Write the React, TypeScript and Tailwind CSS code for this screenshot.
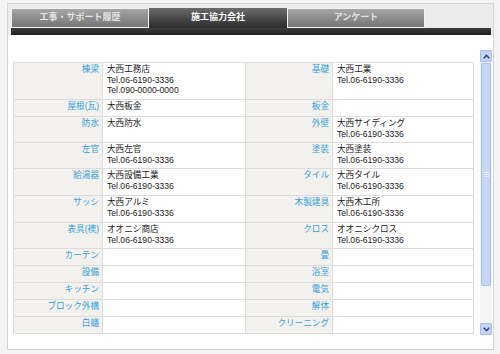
import React from 'react';

type Row = {
  l1: string;
  v1: string[];
  l2: string;
  v2: string[];
};

const TEL = 'Tel.06-6190-3336';

const rows: Row[] = [
  { l1: '棟梁', v1: ['大西工務店', TEL, 'Tel.090-0000-0000'], l2: '基礎', v2: ['大西工業', TEL] },
  { l1: '屋根(瓦)', v1: ['大西板金'], l2: '板金', v2: [] },
  { l1: '防水', v1: ['大西防水'], l2: '外壁', v2: ['大西サイディング', TEL] },
  { l1: '左官', v1: ['大西左官', TEL], l2: '塗装', v2: ['大西塗装', TEL] },
  { l1: '給湯器', v1: ['大西設備工業', TEL], l2: 'タイル', v2: ['大西タイル', TEL] },
  { l1: 'サッシ', v1: ['大西アルミ', TEL], l2: '木製建具', v2: ['大西木工所', TEL] },
  { l1: '表具(襖)', v1: ['オオニシ商店', TEL], l2: 'クロス', v2: ['オオニシクロス', TEL] },
  { l1: 'カーテン', v1: [], l2: '畳', v2: [] },
  { l1: '設備', v1: [], l2: '浴室', v2: [] },
  { l1: 'キッチン', v1: [], l2: '電気', v2: [] },
  { l1: 'ブロック外構', v1: [], l2: '解体', v2: [] },
  { l1: '白蟻', v1: [], l2: 'クリーニング', v2: [] },
];

const font = { fontFamily: '"Liberation Sans", "Noto Sans CJK JP", sans-serif' };

const Label: React.FC<{ text: string }> = ({ text }) => (
  <div className="bg-[#f2f1ee] border-r border-b border-[#dcdcdc] text-right pr-[3px] pt-[1px] text-[#36a0da] leading-[10.5px] whitespace-nowrap">
    {text}
  </div>
);

const Value: React.FC<{ lines: string[] }> = ({ lines }) => (
  <div className="bg-white border-r border-b border-[#dcdcdc] pl-[4px] pt-[1px] text-[#1c1c1c] leading-[10.5px] whitespace-nowrap">
    {lines.map((l, i) => (
      <div key={i}>{l}</div>
    ))}
  </div>
);

const Tab: React.FC<{ label: string; active?: boolean }> = ({ label, active }) =>
  active ? (
    <div className="w-[138px] h-[20px] flex items-center justify-center bg-gradient-to-b from-[#6c6c6c] to-[#2c2c2c] text-white font-bold text-[9px]">
      {label}
    </div>
  ) : (
    <div className="w-[138px] h-[20px] flex items-center justify-center border border-[#f2f2f2] bg-gradient-to-b from-[#a6a6a6] to-[#767676] text-[#e4e4e4] font-bold text-[9px]">
      {label}
    </div>
  );

const Chevron: React.FC<{ up?: boolean }> = ({ up }) => (
  <svg width="7" height="5" viewBox="0 0 7 5">
    <path
      d={up ? 'M0.8 4.2 L3.5 1.3 L6.2 4.2' : 'M0.8 0.8 L3.5 3.7 L6.2 0.8'}
      fill="none"
      stroke="#33466e"
      strokeWidth="1.6"
    />
  </svg>
);

const ScrollBar: React.FC = () => (
  <div className="w-[12px] h-[285px] mt-[15px] flex flex-col bg-[#f4f5f7]">
    <div className="h-[12px] flex items-center justify-center bg-[#c3d3f5] border border-[#a9bde9] rounded-[1px]">
      <Chevron up />
    </div>
    <div className="flex-1 flex flex-col">
      <div className="h-[223px] mt-[1px] mx-[1px] bg-[#c6d6f8] border border-[#aabfea] rounded-[1px] flex items-center justify-center">
        <div className="w-[5px] flex flex-col gap-[1px]">
          <div className="h-px bg-[#eef3fd]" />
          <div className="h-px bg-[#eef3fd]" />
          <div className="h-px bg-[#eef3fd]" />
        </div>
      </div>
    </div>
    <div className="h-[12px] flex items-center justify-center bg-[#c3d3f5] border border-[#a9bde9] rounded-[1px]">
      <Chevron />
    </div>
  </div>
);

export default function App() {
  return (
    <div className="w-[500px] h-[354px] bg-[#f4f4f4] pt-[3px] pl-[7px]" style={font}>
      <div className="w-[487px] h-[347px] border border-[#d4d4d4] bg-[#ececec] flex flex-col">
        <div className="flex pl-[3px] pt-[4px]">
          <Tab label="工事・サポート履歴" />
          <Tab label="施工協力会社" active />
          <Tab label="アンケート" />
        </div>
        <div className="ml-[3px] mr-[2px] h-[7px] bg-gradient-to-b from-[#3e3e3e] to-[#1e1e1e]" />
        <div className="flex-1 bg-white flex">
          <div className="ml-[5px] mt-[27px] w-[461px]">
            <div className="grid grid-cols-[89px_143px_87px_141px] grid-rows-[37px_17px_26px_26px_27px_27px_26px_17px_17px_17px_17px_17px] border-t border-l border-[#dcdcdc] text-[8.6px]">
              {rows.map((r, i) => (
                <React.Fragment key={i}>
                  <Label text={r.l1} />
                  <Value lines={r.v1} />
                  <Label text={r.l2} />
                  <Value lines={r.v2} />
                </React.Fragment>
              ))}
            </div>
          </div>
          <div className="ml-[6px]">
            <ScrollBar />
          </div>
        </div>
      </div>
    </div>
  );
}
